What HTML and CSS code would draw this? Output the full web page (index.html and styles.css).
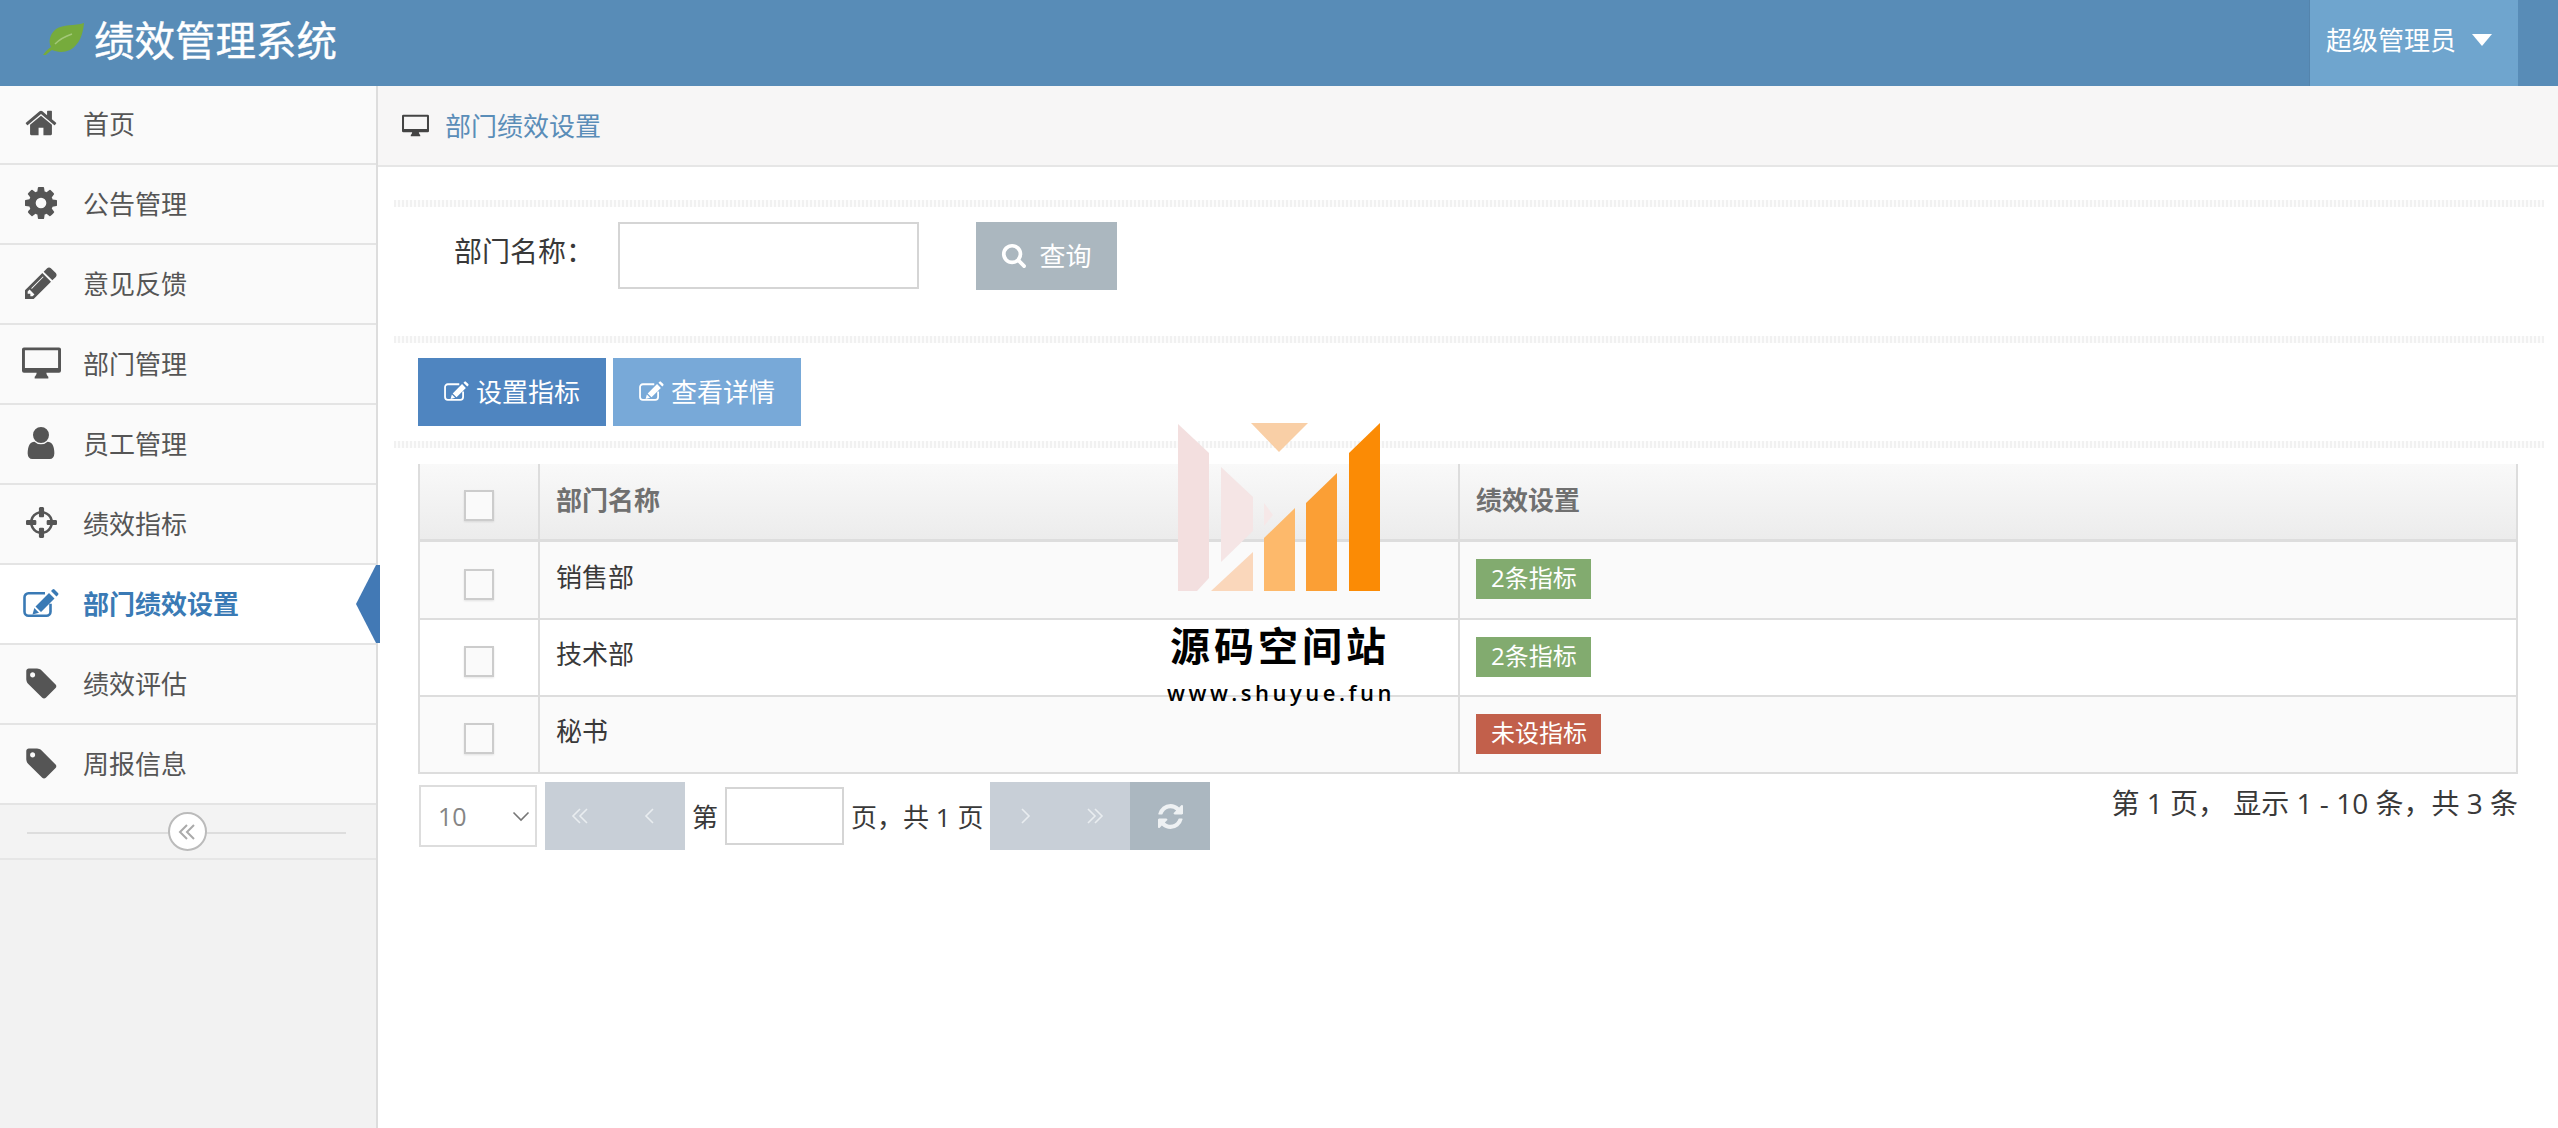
FILE: index.html
```html
<!DOCTYPE html>
<html lang="zh-CN">
<head>
    <meta charset="UTF-8">
    <title>绩效管理系统</title>
    <link rel="stylesheet" href="styles.css">
</head>
<body>
    <svg class="icon-defs" xmlns="http://www.w3.org/2000/svg">
        <symbol id="i-home" viewBox="0 0 1792 1792"><path d="M1472 992v480q0 26-19 45t-45 19h-384v-384h-256v384h-384q-26 0-45-19t-19-45v-480q0-1 .5-3t.5-3l575-474 575 474q1 2 1 6zm223-69l-62 74q-8 9-21 11h-3q-13 0-21-7l-692-577-692 577q-12 8-24 7-13-2-21-11l-62-74q-8-10-7-23.5t11-21.5l719-599q32-26 76-26t76 26l244 204v-195q0-14 9-23t23-9h192q14 0 23 9t9 23v408l219 182q10 8 11 21.5t-7 23.5z"/></symbol>
        <symbol id="i-cog" viewBox="128 128 1536 1536"><path d="M1152 896q0-106-75-181t-181-75-181 75-75 181 75 181 181 75 181-75 75-181zm512-109v222q0 12-8 23t-20 13l-185 28q-19 54-39 91 35 50 107 138 10 12 10 25t-9 23q-27 37-99 108t-94 71q-12 0-26-9l-138-108q-44 23-91 38-16 136-29 186-7 28-36 28h-222q-14 0-24.5-8.5t-11.5-21.5l-28-184q-49-16-90-37l-141 107q-10 9-25 9-14 0-25-11-126-114-165-168-7-10-7-23 0-12 8-23 15-21 51-66.5t54-70.5q-27-50-41-99l-183-27q-13-2-21-12.5t-8-23.5v-222q0-12 8-23t19-13l186-28q14-46 39-92-40-57-107-138-10-12-10-24 0-10 9-23 26-36 98.5-107.5t94.5-71.5q13 0 26 10l138 107q44-23 91-38 16-136 29-186 7-28 36-28h222q14 0 24.5 8.5t11.5 21.5l28 184q49 16 90 37l142-107q9-9 24-9 13 0 25 10 129 119 165 170 7 8 7 22 0 12-8 23-15 21-51 66.5t-54 70.5q26 50 41 98l183 28q13 2 21 12.5t8 23.5z"/></symbol>
        <symbol id="i-pencil" viewBox="128 128 1536 1536"><path d="M491 1536l91-91-235-235-91 91v107h128v128h107zm523-928q0-22-22-22-10 0-17 7l-542 542q-7 7-7 17 0 22 22 22 10 0 17-7l542-542q7-7 7-17zm-54-192l416 416-832 832h-416v-416zm683 96q0 53-37 90l-166 166-416-416 166-165q36-38 90-38 53 0 91 38l235 234q37 39 37 91z"/></symbol>
        <symbol id="i-desktop" viewBox="0 0 40 32"><path fill-rule="evenodd" d="M2 0h36a2 2 0 0 1 2 2v22a2 2 0 0 1-2 2H25c0 2 1 3 2 4v2H13v-2c1-1 2-2 2-4H2a2 2 0 0 1-2-2V2a2 2 0 0 1 2-2zm1 3v18h34V3z"/></symbol>
        <symbol id="i-user" viewBox="256 128 1280 1536"><path d="M1536 1399q0 109-62.500 187t-150.500 78h-854q-88 0-150.500-78t-62.500-187q0-85 8.500-160.500t31.500-152 58.500-131 94-89 134.500-34.500q131 128 313 128t313-128q76 0 134.500 34.500t94 89 58.500 131 31.500 152 8.500 160.500zm-256-887q0 159-112.500 271.500t-271.500 112.500-271.500-112.500-112.500-271.500 112.500-271.500 271.500-112.500 271.500 112.500 112.500 271.500z"/></symbol>
        <symbol id="i-cross" viewBox="0 128 1536 1536"><path d="M1197 1024h-109q-26 0-45-19t-19-45v-128q0-26 19-45t45-19h109q-32-108-112.500-188.500t-188.500-112.500v109q0 26-19 45t-45 19h-128q-26 0-45-19t-19-45v-109q-108 32-188.500 112.500t-112.500 188.500h109q26 0 45 19t19 45v128q0 26-19 45t-45 19h-109q32 108 112.500 188.500t188.500 112.500v-109q0-26 19-45t45-19h128q26 0 45 19t19 45v109q108-32 188.500-112.500t112.500-188.500zm339-192v128q0 26-19 45t-45 19h-143q-37 161-154.500 278.500t-278.500 154.500v143q0 26-19 45t-45 19h-128q-26 0-45-19t-19-45v-143q-161-37-278.500-154.500t-154.500-278.500h-143q-26 0-45-19t-19-45v-128q0-26 19-45t45-19h143q37-161 154.500-278.500t278.500-154.500v-143q0-26 19-45t45-19h128q26 0 45 19t19 45v143q161 37 278.500 154.500t154.500 278.500h143q26 0 45 19t19 45z"/></symbol>
        <symbol id="i-edit" viewBox="0 0 36 28"><path fill="none" stroke="currentColor" stroke-width="2.6" d="M22 4.300H5.500a4 4 0 0 0-4 4v14.400a4 4 0 0 0 4 4h18a4 4 0 0 0 4-4v-8"/><path d="M26 4l5.500 5.500L18 23l-5.500-5.500zM28 2l1.500-1.500a1.500 1.500 0 0 1 2 0l3.500 3.500a1.500 1.500 0 0 1 0 2L33.500 7.500zM11.300 19l4.700 4.700-6.500 1.800z"/></symbol>
        <symbol id="i-tag" viewBox="128 128 1536 1664"><path d="M576 576q0-53-37.500-90.500t-90.500-37.500-90.500 37.500-37.500 90.500 37.500 90.500 90.500 37.500 90.500-37.500 37.500-90.500zm1067 576q0 53-37 90l-491 492q-39 37-91 37-53 0-90-37l-715-716q-38-37-64.500-101t-26.500-117v-416q0-52 38-90t90-38h416q53 0 117 26.500t102 64.500l715 714q37 39 37 91z"/></symbol>
        <symbol id="i-search" viewBox="0 0 1728 1792"><path d="M1216 832q0-185-131.500-316.500t-316.500-131.500-316.500 131.500-131.500 316.500 131.500 316.500 316.500 131.500 316.500-131.500 131.500-316.500zm512 832q0 52-38 90t-90 38q-54 0-90-38l-343-342q-179 124-399 124-143 0-273.500-55.500t-225-150-150-225-55.500-273.500 55.500-273.500 150-225 225-150 273.500-55.500 273.500 55.500 225 150 150 225 55.500 273.500q0 220-124 399l343 343q37 37 37 90z"/></symbol>
        <symbol id="i-refresh" viewBox="128 128 1536 1536"><path d="M1639 1056q0 5-1 7-64 268-268 434.500t-478 166.500q-146 0-282.500-55t-243.500-157l-129 129q-19 19-45 19t-45-19-19-45v-448q0-26 19-45t45-19h448q26 0 45 19t19 45-19 45l-137 137q71 66 161 102t187 36q134 0 250-65t186-179q11-17 53-117 8-23 30-23h192q13 0 22.500 9.500t9.500 22.500zm25-800v448q0 26-19 45t-45 19h-448q-26 0-45-19t-19-45 19-45l138-138q-148-137-349-137-134 0-250 65t-186 179q-11 17-53 117-8 23-30 23h-199q-13 0-22.500-9.500t-9.500-22.500v-7q65-268 270-434.500t480-166.500q146 0 284 55.500t245 156.500l130-129q19-19 45-19t45 19 19 45z"/></symbol>
    </svg>

    <header class="navbar">
        <div class="brand">
            <svg class="brand-leaf" viewBox="0 0 41 32"><path fill="#76ab3c" d="M41 0c-1 12-5 22-14 27-7 3-13 2-18 0-2 1-4 3-6 5H0c3-4 5-6 8-8-3-6-1-13 5-18C20 1 32 3 41 0z"/><path fill="none" stroke="#a3c878" stroke-width="1.5" d="M12 21c5-5 11-8 17-10"/></svg>
            <span>绩效管理系统</span>
        </div>
        <div class="user-box">
            <span>超级管理员</span>
            <i class="caret"></i>
        </div>
    </header>

    <div class="layout">
        <aside class="sidebar">
            <ul class="nav-list">
                <li class="nav-item"><span class="nav-icon"><svg width="34" height="34"><use href="#i-home"/></svg></span>首页</li>
                <li class="nav-item"><span class="nav-icon"><svg width="32" height="32"><use href="#i-cog"/></svg></span>公告管理</li>
                <li class="nav-item"><span class="nav-icon"><svg width="32" height="32"><use href="#i-pencil"/></svg></span>意见反馈</li>
                <li class="nav-item"><span class="nav-icon"><svg width="39" height="32"><use href="#i-desktop"/></svg></span>部门管理</li>
                <li class="nav-item"><span class="nav-icon"><svg width="28" height="32"><use href="#i-user"/></svg></span>员工管理</li>
                <li class="nav-item"><span class="nav-icon"><svg width="31" height="31"><use href="#i-cross"/></svg></span>绩效指标</li>
                <li class="nav-item active"><span class="nav-icon"><svg width="36" height="28"><use href="#i-edit"/></svg></span>部门绩效设置</li>
                <li class="nav-item"><span class="nav-icon"><svg width="31" height="33"><use href="#i-tag"/></svg></span>绩效评估</li>
                <li class="nav-item"><span class="nav-icon"><svg width="31" height="33"><use href="#i-tag"/></svg></span>周报信息</li>
            </ul>
            <div class="collapse-bar">
                <span class="collapse-btn"><svg width="18" height="18" viewBox="0 0 18 18"><path d="M9 2L2 9l7 7M16 2L9 9l7 7"/></svg></span>
            </div>
        </aside>

        <main class="main">
            <div class="breadcrumb">
                <svg width="27" height="23" class="crumb-icon"><use href="#i-desktop"/></svg>
                <span>部门绩效设置</span>
            </div>

            <div class="content">
                <div class="hr-dotted first"></div>
                <form class="search-row">
                    <label class="search-label">部门名称：</label>
                    <input type="text" class="text-input search-input">
                    <button type="button" class="btn btn-grey"><svg width="25" height="26"><use href="#i-search"/></svg>查询</button>
                </form>
                <div class="hr-dotted"></div>
                <div class="toolbar">
                    <button type="button" class="btn btn-primary"><svg width="25" height="20"><use href="#i-edit"/></svg>设置指标</button>
                    <button type="button" class="btn btn-info"><svg width="25" height="20"><use href="#i-edit"/></svg>查看详情</button>
                </div>
                <div class="hr-dotted"></div>

                <div class="table-wrap">
                    <table class="data-table">
                        <colgroup>
                            <col class="col-check">
                            <col class="col-name">
                            <col>
                        </colgroup>
                        <thead>
                            <tr>
                                <th class="check-cell"><input type="checkbox" class="check"></th>
                                <th>部门名称</th>
                                <th>绩效设置</th>
                            </tr>
                        </thead>
                        <tbody>
                            <tr>
                                <td class="check-cell"><input type="checkbox" class="check"></td>
                                <td>销售部</td>
                                <td class="badge-cell"><span class="badge badge-success">2条指标</span></td>
                            </tr>
                            <tr>
                                <td class="check-cell"><input type="checkbox" class="check"></td>
                                <td>技术部</td>
                                <td class="badge-cell"><span class="badge badge-success">2条指标</span></td>
                            </tr>
                            <tr>
                                <td class="check-cell"><input type="checkbox" class="check"></td>
                                <td>秘书</td>
                                <td class="badge-cell"><span class="badge badge-danger">未设指标</span></td>
                            </tr>
                        </tbody>
                    </table>

                    <div class="pager">
                        <div class="pager-left">
                            <div class="page-size">
                                <select class="page-select"><option>10</option></select>
                                <svg class="page-arrow" width="18" height="11" viewBox="0 0 18 11"><path d="M1.5 1.5L9 9l7.500-7.500"/></svg>
                            </div>
                            <div class="pager-btns">
                                <span class="pager-btn"><svg width="20" height="20" viewBox="0 0 20 20"><path d="M10 3L3 10l7 7M17 3l-7 7 7 7"/></svg></span>
                                <span class="pager-btn"><svg width="12" height="20" viewBox="0 0 12 20"><path d="M9 3l-7 7 7 7"/></svg></span>
                            </div>
                            <span>第</span>
                            <input type="text" class="text-input page-input">
                            <span>页，共 1 页</span>
                            <div class="pager-btns">
                                <span class="pager-btn"><svg width="12" height="20" viewBox="0 0 12 20"><path d="M3 3l7 7-7 7"/></svg></span>
                                <span class="pager-btn"><svg width="20" height="20" viewBox="0 0 20 20"><path d="M3 3l7 7-7 7M10 3l7 7-7 7"/></svg></span>
                            </div>
                            <span class="pager-refresh"><svg width="25" height="25"><use href="#i-refresh"/></svg></span>
                        </div>
                        <div class="pager-info">第 1 页， 显示 1 - 10 条，共 3 条</div>
                    </div>
                </div>
            </div>
        </main>
    </div>

    <div class="watermark">
        <svg class="watermark-logo" width="224" height="168" viewBox="1167 423 224 168">
            <polygon fill="#f3dfdf" points="1178,424 1209,453 1209,578 1197,591 1178,591"/>
            <polygon fill="#f5e5e5" points="1221,467 1253,497 1253,531 1221,562"/>
            <polygon fill="#fad7bb" points="1211,591 1253,552 1253,591"/>
            <polygon fill="#f6e8e8" points="1264,503 1273,515 1264,526"/>
            <polygon fill="#fdb96b" points="1264,538 1295,508 1295,591 1264,591"/>
            <polygon fill="#fb9f35" points="1306,503 1337,473 1337,591 1306,591"/>
            <polygon fill="#fb8b05" points="1349,453 1380,423 1380,591 1349,591"/>
            <polygon fill="#f9cfa6" points="1251,423 1308,423 1279,452"/>
        </svg>
        <div class="watermark-title">源码空间站</div>
        <div class="watermark-url">www.shuyue.fun</div>
    </div>
</body>
</html>
```

FILE: styles.css
```css
* {
    margin: 0;
    padding: 0;
    box-sizing: border-box;
}

html, body {
    height: 100%;
}

body {
    position: relative;
    overflow: hidden;
    font-family: "Open Sans", "Noto Sans CJK SC", sans-serif;
    font-size: 26px;
    color: #393939;
    background-color: #fff;
}

.icon-defs {
    position: absolute;
    width: 0;
    height: 0;
}

svg {
    fill: currentColor;
    flex-shrink: 0;
}

/* top bar */
.navbar {
    height: 86px;
    display: flex;
    justify-content: space-between;
    background-color: #588cb7;
    color: #fff;
}

.brand {
    display: flex;
    align-items: center;
    gap: 10px;
    padding-left: 43px;
    font-size: 40.5px;
}

.brand span {
    padding-bottom: 9px;
    -webkit-text-stroke: 0.4px #fff;
}

.brand-leaf {
    width: 41px;
    height: 32px;
    margin-top: -8px;
}

.user-box {
    width: 209px;
    margin-right: 40px;
    padding-left: 16px;
    display: flex;
    align-items: center;
    gap: 16px;
    background-color: #6fa5ce;
    border-left: 1px solid #5484ad;
}

.user-box span {
    padding-bottom: 9px;
}

.caret {
    width: 0;
    height: 0;
    margin-top: -6px;
    border-left: 10px solid transparent;
    border-right: 10px solid transparent;
    border-top: 12px solid #fff;
}

.layout {
    display: flex;
    height: calc(100% - 86px);
}

/* sidebar */
.sidebar {
    width: 378px;
    flex-shrink: 0;
    background-color: #f2f2f2;
    border-right: 2px solid #ddd;
}

.nav-list {
    list-style: none;
}

.nav-item {
    position: relative;
    height: 80px;
    display: flex;
    align-items: center;
    padding-bottom: 3px;
    background-color: #fafafa;
    border-bottom: 2px solid #e4e4e4;
    color: #555;
}

.nav-item:first-child {
    height: 79px;
}

.nav-icon {
    width: 83px;
    padding-right: 1px;
    display: flex;
    justify-content: center;
    color: #555;
}

.nav-item.active {
    background-color: #fff;
    color: #3a7ab5;
    font-weight: 700;
}

.nav-item.active .nav-icon {
    color: #3a7ab5;
}

.nav-item.active::before {
    content: "";
    position: absolute;
    right: 0;
    top: 0;
    border-top: 39px solid transparent;
    border-bottom: 39px solid transparent;
    border-right: 20px solid #4279b5;
}

.nav-item.active::after {
    content: "";
    position: absolute;
    left: 100%;
    top: 0;
    width: 4px;
    height: 78px;
    background-color: #4279b5;
    z-index: 2;
}

.collapse-bar {
    position: relative;
    height: 55px;
    padding-right: 2px;
    display: flex;
    align-items: center;
    justify-content: center;
    background-color: #f3f3f3;
    border-bottom: 2px solid #e6e6e6;
}

.collapse-bar::before {
    content: "";
    position: absolute;
    left: 27px;
    right: 30px;
    top: 27px;
    height: 2px;
    background-color: #ddd;
}

.collapse-btn {
    position: relative;
    width: 39px;
    height: 39px;
    display: flex;
    align-items: center;
    justify-content: center;
    background-color: #fff;
    border: 2px solid #bbb;
    border-radius: 50%;
}

.collapse-btn path {
    fill: none;
    stroke: #aaa;
    stroke-width: 2;
}

/* main area */
.main {
    flex: 1;
    min-width: 0;
}

.breadcrumb {
    height: 81px;
    display: flex;
    align-items: center;
    gap: 16px;
    padding-left: 24px;
    background-color: #f7f6f6;
    border-bottom: 2px solid #e6e6e6;
    color: #5a8db8;
}

.breadcrumb span {
    padding-bottom: 2px;
}

.crumb-icon {
    color: #444;
}

.content {
    padding: 0 14px 0 16px;
}

.hr-dotted {
    height: 7px;
    background: repeating-linear-gradient(90deg, #f1f1f1 0, #f1f1f1 2px, #fcfcfc 2px, #fcfcfc 4px);
}

.hr-dotted.first {
    margin-top: 33px;
}

.search-row {
    height: 129px;
    padding: 15px 0 0 60px;
    display: flex;
    align-items: flex-start;
}

.search-label {
    width: 164px;
    font-size: 28px;
    line-height: 58px;
}

.text-input {
    border: 2px solid #d5d5d5;
    background-color: #fff;
    outline: none;
}

.search-input {
    width: 301px;
    height: 67px;
}

.btn {
    height: 68px;
    padding-bottom: 2px;
    display: flex;
    align-items: center;
    justify-content: center;
    border: none;
    color: #fff;
    font-family: inherit;
    font-size: 26px;
}

.btn-grey {
    width: 141px;
    margin-left: 57px;
    gap: 13px;
    background-color: #abb7bf;
}

.toolbar {
    height: 98px;
    padding: 15px 0 0 24px;
    display: flex;
    align-items: flex-start;
    gap: 7px;
}

.btn-primary, .btn-info {
    width: 188px;
    gap: 7px;
}

.btn-primary {
    background-color: #4f85c0;
}

.btn-info {
    background-color: #78a9d8;
}

/* table */
.table-wrap {
    padding: 16px 26px 0 24px;
}

.data-table {
    width: 100%;
    table-layout: fixed;
    border-collapse: separate;
    border-spacing: 0;
}

.col-check {
    width: 122px;
}

.col-name {
    width: 920px;
}

.data-table th, .data-table td {
    padding: 0 0 9px 16px;
    text-align: left;
    border-right: 2px solid #ddd;
    border-bottom: 2px solid #ddd;
}

.data-table th:first-child, .data-table td:first-child {
    border-left: 2px solid #ddd;
}

.data-table th {
    height: 78px;
    padding-bottom: 6px;
    color: #707070;
    font-weight: 700;
    background: linear-gradient(#f9f9f9, #ececec);
    border-bottom-width: 3px;
}

.data-table td {
    height: 77px;
    background-color: #fff;
}

.data-table tbody tr:first-child td {
    height: 78px;
}

.data-table tbody tr:nth-child(odd) td {
    background-color: #fafafa;
}

.data-table .check-cell {
    padding: 8px 0 0;
    text-align: center;
}

.data-table .badge-cell {
    padding-bottom: 3px;
}

.check {
    appearance: none;
    display: block;
    width: 30px;
    height: 31px;
    margin: 0 auto;
    background-color: #fafafa;
    border: 2px solid #ccc;
    box-shadow: 0 1px 2px rgba(0, 0, 0, 0.1);
}

.badge {
    display: inline-block;
    height: 40px;
    padding: 0 14px 0 15px;
    line-height: 38px;
    font-size: 24px;
    color: #fff;
    vertical-align: middle;
}

.badge-success {
    background-color: #82ab6f;
}

.badge-danger {
    background-color: #c2604b;
}

/* pager */
.pager {
    margin-top: 8px;
    display: flex;
    justify-content: space-between;
    align-items: flex-start;
}

.pager-left {
    display: flex;
    align-items: center;
    gap: 7px;
    height: 68px;
    padding-left: 1px;
}

.page-size {
    position: relative;
    width: 118px;
    height: 62px;
    margin-right: 1px;
}

.page-select {
    appearance: none;
    display: block;
    width: 100%;
    height: 100%;
    padding-left: 17px;
    border: 2px solid #ddd;
    border-radius: 0;
    background-color: #fff;
    color: #858585;
    font-family: inherit;
    font-size: 25px;
}

.page-arrow {
    position: absolute;
    right: 7px;
    top: 26px;
}

.page-arrow path {
    fill: none;
    stroke: #777;
    stroke-width: 1.6;
}

.pager-btns {
    display: flex;
    background-color: #c8cfd7;
}

.pager-btn {
    width: 70px;
    height: 68px;
    display: flex;
    align-items: center;
    justify-content: center;
}

.pager-btn path {
    fill: none;
    stroke: #e9edf0;
    stroke-width: 1.6;
}

.page-input {
    width: 119px;
    height: 58px;
}

.pager-refresh {
    width: 80px;
    height: 68px;
    margin-left: -7px;
    display: flex;
    align-items: center;
    justify-content: center;
    background-color: #abb7c0;
    color: #eef1f3;
}

.pager-info {
    font-size: 28px;
    line-height: 42px;
    white-space: nowrap;
}

/* watermark on top of the page */
.watermark {
    position: absolute;
    left: 1167px;
    top: 423px;
    width: 224px;
    color: #000;
    text-align: center;
}

.watermark-logo {
    display: block;
}

.watermark-title {
    margin-top: 33px;
    padding-left: 2px;
    font-size: 40px;
    line-height: 44px;
    font-weight: 700;
    letter-spacing: 4px;
    white-space: nowrap;
}

.watermark-url {
    margin-top: 10px;
    font-size: 22px;
    line-height: 28px;
    font-weight: 600;
    letter-spacing: 3.5px;
    white-space: nowrap;
}
```
